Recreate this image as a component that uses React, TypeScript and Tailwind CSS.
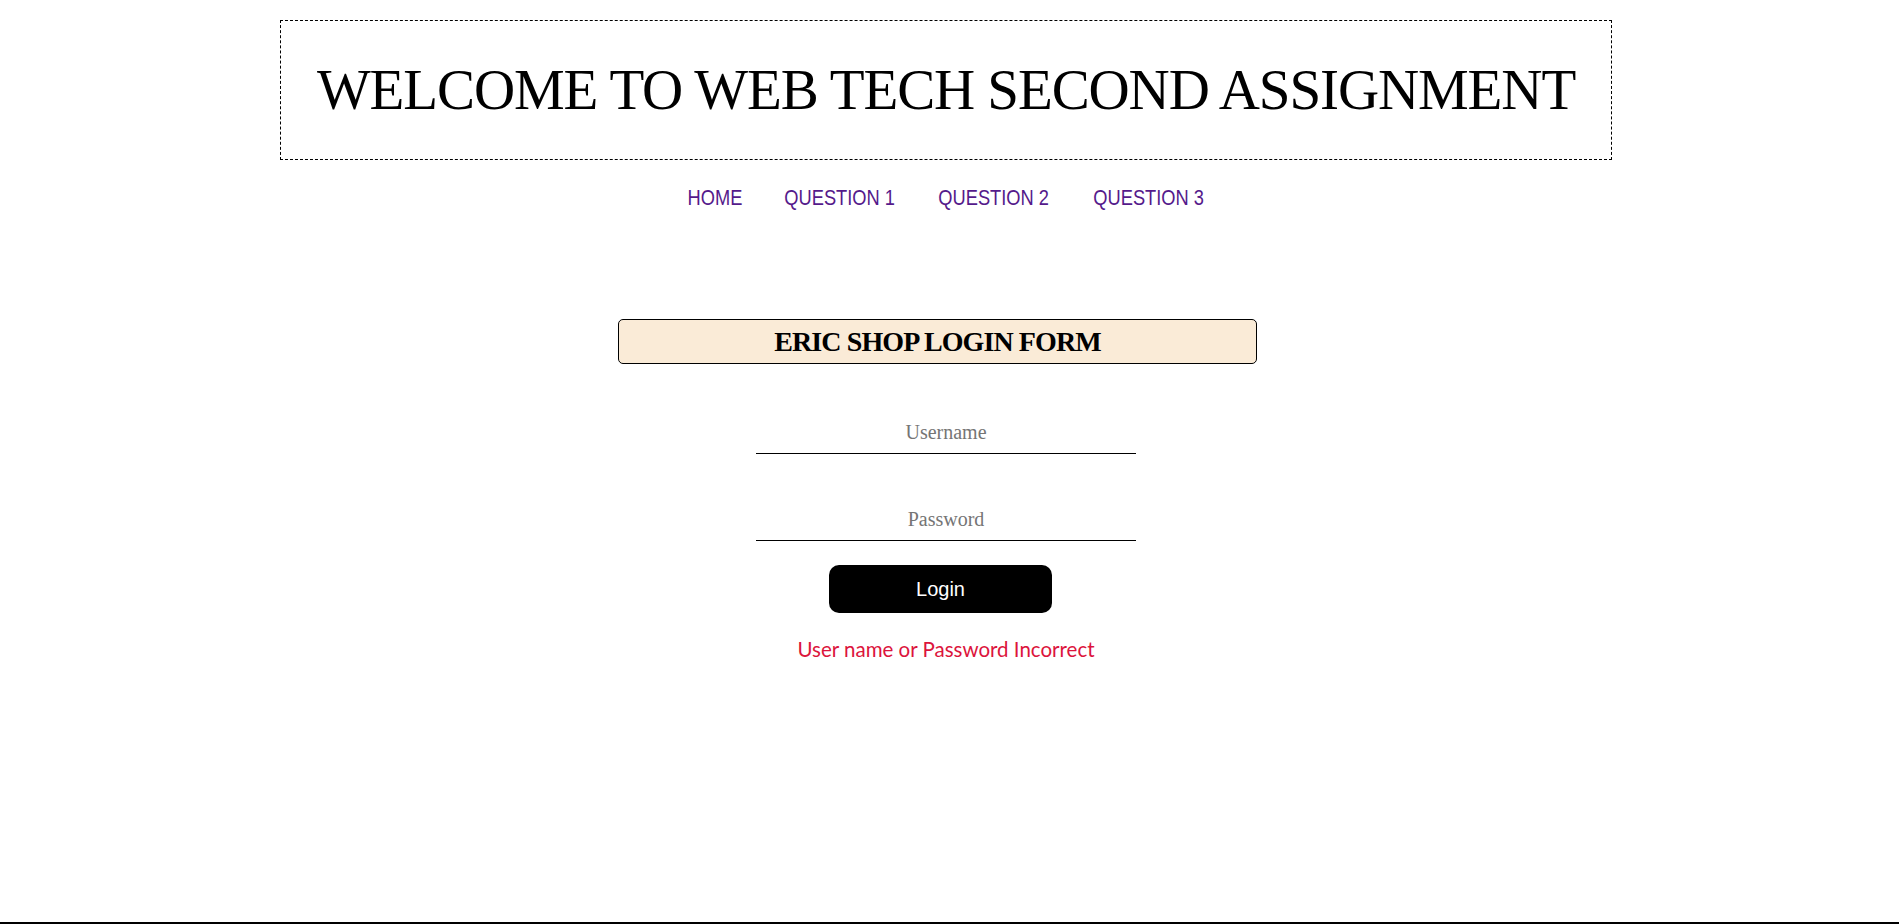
import { useState } from "react";

// narrow font is missing, so each link gets its measured width and the text is squeezed into it
const navLinks = [
  { label: "HOME", width: "w-[54px]" },
  { label: "QUESTION 1", width: "w-[110px]" },
  { label: "QUESTION 2", width: "w-[112px]" },
  { label: "QUESTION 3", width: "w-[112px]" },
];

export default function App() {
  const [username, setUsername] = useState("");
  const [password, setPassword] = useState("");
  const [error] = useState("User name or Password Incorrect");

  const handleSubmit = (event: React.FormEvent) => {
    event.preventDefault();
  };

  return (
    <div className="flex min-h-screen flex-col bg-white">
      <div className="flex w-[1892px] flex-1 flex-col items-center pt-[20px]">
        <header className="flex h-[140px] w-[1332px] items-center justify-center border border-dashed border-black">
          <h1 className="text-[57px] leading-[66px] tracking-[-1.1px] text-black [font-family:'Liberation_Serif',serif]">
            WELCOME TO WEB TECH SECOND ASSIGNMENT
          </h1>
        </header>

        <nav className="mt-[25px] flex gap-[43px] text-[22px] leading-[25px] text-[#551a8b] [font-family:'Liberation_Sans',Arial,sans-serif]">
          {navLinks.map((link) => (
            <a key={link.label} href="#" className={`flex justify-center ${link.width}`}>
              <span className="shrink-0 scale-x-[0.83] whitespace-nowrap">{link.label}</span>
            </a>
          ))}
        </nav>

        <form onSubmit={handleSubmit} className="mt-[109px] flex flex-col items-center">
          <div className="mr-[17px] flex h-[45px] w-[639px] items-center justify-center rounded-[5px] border border-black bg-[#faebd7]">
            <h2 className="text-[28px] font-bold tracking-[-0.9px] text-black [font-family:'Liberation_Serif',serif]">
              ERIC SHOP LOGIN FORM
            </h2>
          </div>

          <input
            type="text"
            value={username}
            onChange={(event) => setUsername(event.target.value)}
            placeholder="Username"
            className="mt-[49px] block w-[380px] border-0 border-b border-black bg-transparent pt-[8px] pb-[9px] text-center text-[20px] leading-[23px] text-black outline-none placeholder:text-[#757575] [font-family:'Liberation_Serif',serif]"
          />

          <input
            type="password"
            value={password}
            onChange={(event) => setPassword(event.target.value)}
            placeholder="Password"
            className="mt-[46px] block w-[380px] border-0 border-b border-black bg-transparent pt-[8px] pb-[9px] text-center text-[20px] leading-[23px] text-black outline-none placeholder:text-[#757575] [font-family:'Liberation_Serif',serif]"
          />

          <button
            type="submit"
            className="mt-[24px] mr-[11px] flex h-[48px] w-[223px] items-center justify-center rounded-[10px] bg-black text-[20px] text-white [font-family:'Liberation_Sans',sans-serif]"
          >
            Login
          </button>

          {error && (
            <p className="mt-[24px] text-[20.5px] leading-[24px] text-[#dc143c] [font-family:Lato,sans-serif]">
              {error}
            </p>
          )}
        </form>
      </div>

      <footer className="h-[2px] w-full bg-black" />
    </div>
  );
}
